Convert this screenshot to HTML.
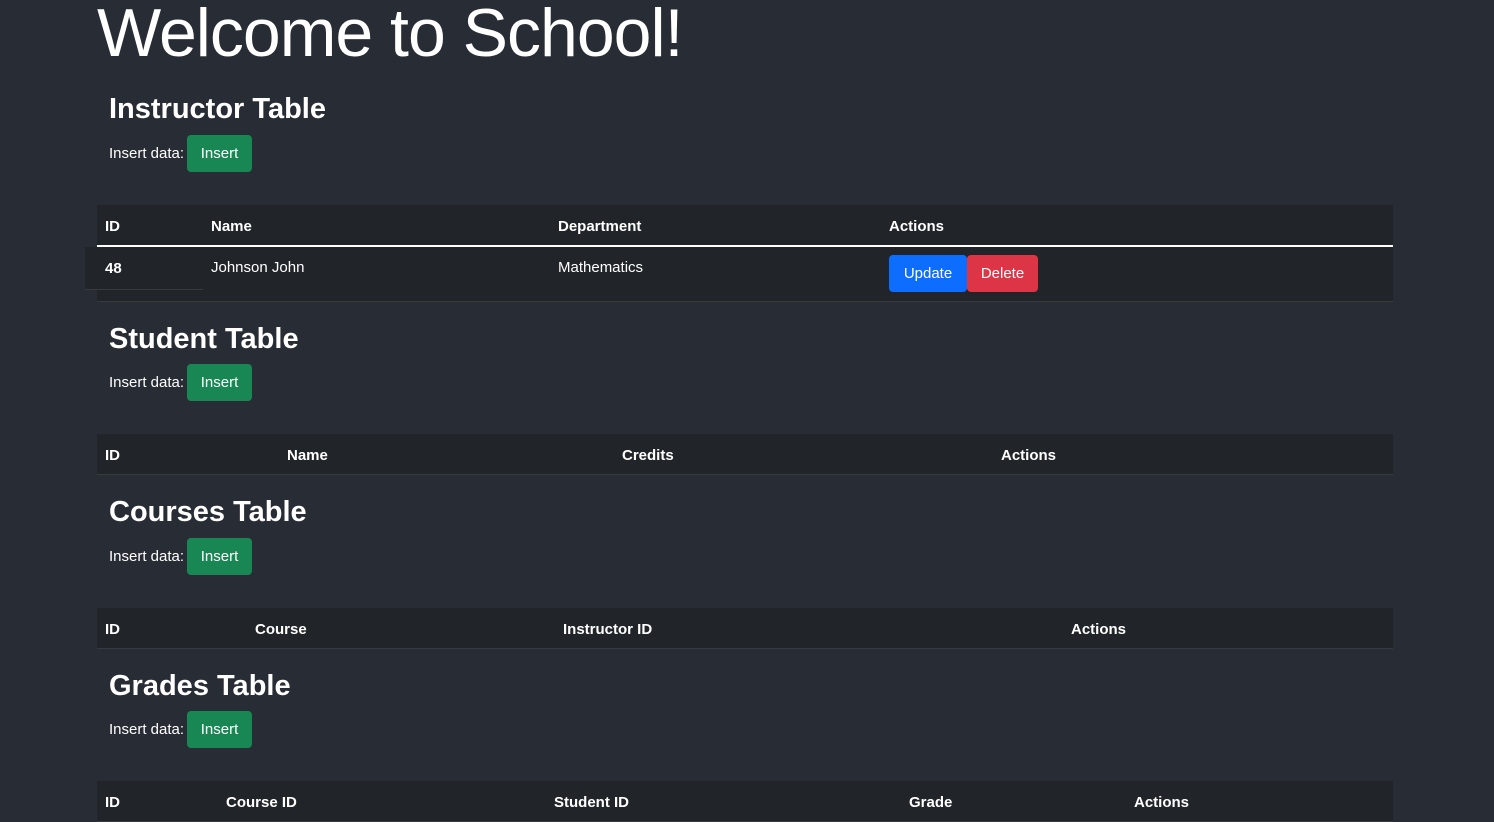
<!DOCTYPE html>
<html><head><style>
body{margin:0;background:#282c34;width:1494px;height:806px;overflow:hidden;font-family:"Liberation Sans",sans-serif;color:#fff;position:relative}
.a{position:absolute;white-space:nowrap}
h1{position:absolute;left:97px;top:-6px;margin:0;font-size:68px;font-weight:normal;letter-spacing:-1px}
.h{font-size:29px;font-weight:bold;left:109px}
.lbl{font-size:15px;left:109px}
.btn{position:absolute;height:37px;border-radius:4px;font-size:15px;display:flex;align-items:center;justify-content:center;color:#fff}
.ins{background:#198754;left:187px;width:65px}
.tb{position:absolute;left:97px;width:1296px;background:#212529;border-bottom:1px solid #373b3e}
.th{position:absolute;font-size:15px;font-weight:bold;top:13px}
</style></head><body>
<h1>Welcome to School!</h1>

<div class="a h" style="top:93px">Instructor Table</div>
<div class="a lbl" style="top:145px">Insert data:</div>
<div class="btn ins" style="top:135px">Insert</div>
<div class="tb" style="top:205px;height:40px;border-bottom:2px solid #fff">
<span class="th" style="left:8px">ID</span><span class="th" style="left:114px">Name</span><span class="th" style="left:461px">Department</span><span class="th" style="left:792px">Actions</span></div>
<div class="tb" style="top:247px;height:54px"></div>
<div class="a" style="left:85px;top:247px;width:118px;height:42px;background:#212529;border-bottom:1px solid #373b3e"></div>
<div class="a" style="left:105px;top:260px;font-size:15px;font-weight:bold">48</div>
<div class="a" style="left:211px;top:259px;font-size:15px">Johnson John</div>
<div class="a" style="left:558px;top:259px;font-size:15px">Mathematics</div>
<div class="btn" style="left:889px;top:255px;width:78px;background:#0d6efd">Update</div>
<div class="btn" style="left:967px;top:255px;width:71px;background:#dc3545">Delete</div>

<div class="a h" style="top:323px">Student Table</div>
<div class="a lbl" style="top:374px">Insert data:</div>
<div class="btn ins" style="top:364px">Insert</div>
<div class="tb" style="top:434px;height:40px">
<span class="th" style="left:8px">ID</span><span class="th" style="left:190px">Name</span><span class="th" style="left:525px">Credits</span><span class="th" style="left:904px">Actions</span></div>

<div class="a h" style="top:496px">Courses Table</div>
<div class="a lbl" style="top:548px">Insert data:</div>
<div class="btn ins" style="top:538px">Insert</div>
<div class="tb" style="top:608px;height:40px">
<span class="th" style="left:8px">ID</span><span class="th" style="left:158px">Course</span><span class="th" style="left:466px">Instructor ID</span><span class="th" style="left:974px">Actions</span></div>

<div class="a h" style="top:670px">Grades Table</div>
<div class="a lbl" style="top:721px">Insert data:</div>
<div class="btn ins" style="top:711px">Insert</div>
<div class="tb" style="top:781px;height:40px">
<span class="th" style="left:8px">ID</span><span class="th" style="left:129px">Course ID</span><span class="th" style="left:457px">Student ID</span><span class="th" style="left:812px">Grade</span><span class="th" style="left:1037px">Actions</span></div>
</body></html>
